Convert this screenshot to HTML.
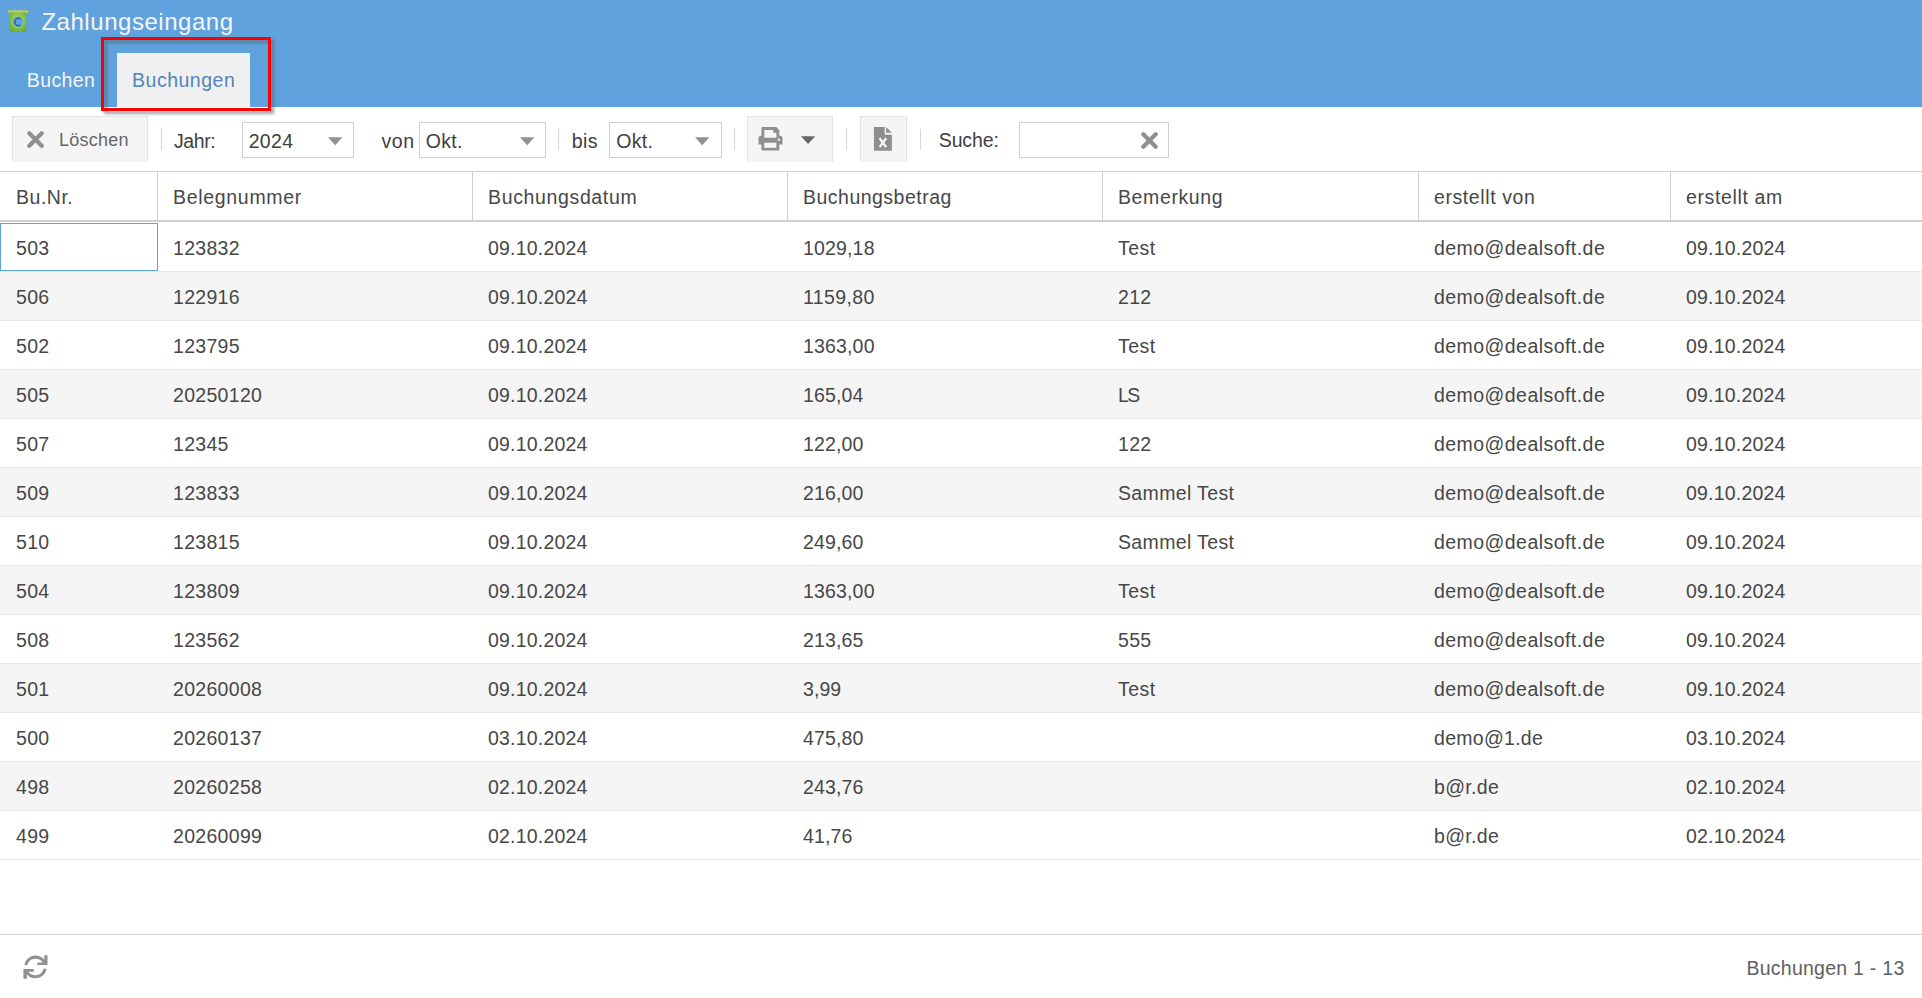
<!DOCTYPE html>
<html><head><meta charset="utf-8"><title>Zahlungseingang</title>
<style>
html,body{margin:0;padding:0;width:1922px;height:998px;overflow:hidden;background:#fff}
body{position:relative;font-family:"Liberation Sans",sans-serif}
.t{position:absolute;white-space:nowrap;font-family:"Liberation Sans",sans-serif}
div,svg{box-sizing:content-box}
</style></head><body>
<div style="position:absolute;left:0;top:0;width:1922px;height:107px;background:#5fa2dd"></div>
<svg style="position:absolute;left:0;top:0" width="40" height="40" viewBox="0 0 40 40">
<defs><radialGradient id="lg" cx="50%" cy="40%" r="65%"><stop offset="0" stop-color="#a3d845"/><stop offset="0.6" stop-color="#8cc63c"/><stop offset="1" stop-color="#6aa936"/></radialGradient></defs>
<rect x="7.3" y="9.8" width="21.4" height="4.2" rx="1.3" fill="#93b07c"/>
<rect x="8" y="10.4" width="20" height="2" rx="0.8" fill="#b2cf84"/>
<path d="M9.9 12.6 H26.2 V31 Q26.2 32 25.2 32 H10.9 Q9.9 32 9.9 31 Z" fill="url(#lg)"/>
<circle cx="17.9" cy="21.9" r="5.7" fill="#8fc9a8"/>
<circle cx="17.9" cy="21.9" r="5.1" fill="#5fa2dd"/>
<path d="M20.5 18.9 A3.5 3.8 0 1 0 20.5 25.0" fill="none" stroke="#2d6499" stroke-width="1.25"/>
</svg>
<div class="t" style="left:41.40px;top:9.98px;font-size:24px;line-height:24px;letter-spacing:0.398px;color:#f5f5f5;letter-spacing:0.54px">Zahlungseingang</div>
<div class="t" style="left:26.80px;top:71.49px;font-size:19.5px;line-height:19.5px;letter-spacing:0.395px;color:#f5f5f5;">Buchen</div>
<div style="position:absolute;left:117px;top:53px;width:133px;height:54px;background:#f0f0f0"></div>
<div class="t" style="left:132.10px;top:71.49px;font-size:19.5px;line-height:19.5px;letter-spacing:0.495px;color:#5284b8;">Buchungen</div>
<div style="position:absolute;left:101px;top:37px;width:164px;height:68px;border:3px solid #ff0000;filter:drop-shadow(3px 3px 1.8px rgba(85,95,105,0.6))"></div>
<div style="position:absolute;left:12px;top:116px;width:134px;height:45px;background:#f5f5f5;border:1px solid #e4e4e4;border-bottom:0"></div>
<svg style="position:absolute;left:27px;top:130.5px" width="17" height="17" viewBox="0 0 17 17"><path d="M2.3 2.3 L14.7 14.7 M14.7 2.3 L2.3 14.7" stroke="#8f8f8f" stroke-width="4.2" stroke-linecap="round"/></svg>
<div class="t" style="left:59.10px;top:130.76px;font-size:18px;line-height:18px;letter-spacing:0.208px;color:#666666;">Löschen</div>
<div style="position:absolute;left:161px;top:129px;width:1px;height:21px;background:#d6d6d6"></div>
<div class="t" style="left:174.00px;top:132.49px;font-size:19.5px;line-height:19.5px;letter-spacing:-0.436px;color:#404040;">Jahr:</div>
<div style="position:absolute;left:242px;top:122px;width:110px;height:34px;background:#fff;border:1px solid #cfcfcf"></div><div class="t" style="left:248.70px;top:132.49px;font-size:19.5px;line-height:19.5px;letter-spacing:0.304px;color:#404040;">2024</div><svg style="position:absolute;left:327.7px;top:137px" width="15" height="9" viewBox="0 0 15 9"><path d="M0 0.3 H14.4 L7.2 8.2 Z" fill="#919191"/></svg>
<div class="t" style="left:381.40px;top:132.49px;font-size:19.5px;line-height:19.5px;letter-spacing:0.692px;color:#404040;">von</div>
<div style="position:absolute;left:419px;top:122px;width:125px;height:34px;background:#fff;border:1px solid #cfcfcf"></div><div class="t" style="left:425.70px;top:132.49px;font-size:19.5px;line-height:19.5px;letter-spacing:0.338px;color:#404040;">Okt.</div><svg style="position:absolute;left:519.8px;top:137px" width="15" height="9" viewBox="0 0 15 9"><path d="M0 0.3 H14.4 L7.2 8.2 Z" fill="#919191"/></svg>
<div style="position:absolute;left:558px;top:129px;width:1px;height:21px;background:#d6d6d6"></div>
<div class="t" style="left:571.70px;top:132.49px;font-size:19.5px;line-height:19.5px;letter-spacing:0.419px;color:#404040;">bis</div>
<div style="position:absolute;left:609px;top:122px;width:111px;height:34px;background:#fff;border:1px solid #cfcfcf"></div><div class="t" style="left:616.20px;top:132.49px;font-size:19.5px;line-height:19.5px;letter-spacing:0.338px;color:#404040;">Okt.</div><svg style="position:absolute;left:695.3px;top:137px" width="15" height="9" viewBox="0 0 15 9"><path d="M0 0.3 H14.4 L7.2 8.2 Z" fill="#919191"/></svg>
<div style="position:absolute;left:734px;top:129px;width:1px;height:21px;background:#d6d6d6"></div>
<div style="position:absolute;left:747px;top:116px;width:84px;height:45px;background:#f5f5f5;border:1px solid #e4e4e4;border-bottom:0"></div>
<svg style="position:absolute;left:757px;top:126px" width="27" height="26" viewBox="0 0 27 26">
<g fill="#8f8f8f">
<path d="M4.4 2.1 Q4.4 1.1 5.4 1.1 H19.4 L22.3 4.3 V11 H4.4 Z"/>
<path d="M1.5 12.3 Q1.5 9.8 4 9.8 H23 Q25.5 9.8 25.5 12.3 V18.6 H1.5 Z"/>
<path d="M4.4 16 H22.3 V23.5 Q22.3 24.5 21.3 24.5 H5.4 Q4.4 24.5 4.4 23.5 Z"/>
</g>
<g fill="#f5f5f5">
<path d="M7.3 3.9 H16.2 V6.7 H19.4 V11.7 H7.3 Z"/>
<path d="M7.3 16.7 H19.4 V21.8 H7.3 Z"/>
<circle cx="21.8" cy="13.8" r="1.2"/>
</g>
</svg>
<svg style="position:absolute;left:800.9px;top:136px" width="15" height="9" viewBox="0 0 15 9"><path d="M0 0.2 H14.2 L7.1 8.1 Z" fill="#666666"/></svg>
<div style="position:absolute;left:846px;top:129px;width:1px;height:21px;background:#d6d6d6"></div>
<div style="position:absolute;left:860px;top:116px;width:45px;height:45px;background:#f5f5f5;border:1px solid #e4e4e4;border-bottom:0"></div>
<svg style="position:absolute;left:873px;top:126px" width="20" height="26" viewBox="0 0 20 26">
<path d="M0.9 1 H11.7 V7.5 Q11.7 8.7 12.9 8.7 H18.9 V24.7 H0.9 Z" fill="#8f8f8f"/>
<path d="M13.1 1 L18.9 6.7 H13.1 Z" fill="#8f8f8f"/>
<path d="M6.6 12.2 L13.2 21.1 M13.2 12.2 L6.6 21.1" stroke="#f5f5f5" stroke-width="2.4" fill="none"/>
</svg>
<div style="position:absolute;left:920px;top:129px;width:1px;height:21px;background:#d6d6d6"></div>
<div class="t" style="left:938.80px;top:131.49px;font-size:19.5px;line-height:19.5px;letter-spacing:-0.141px;color:#404040;">Suche:</div>
<div style="position:absolute;left:1019px;top:122px;width:148px;height:34px;background:#fff;border:1px solid #cfcfcf"></div>
<svg style="position:absolute;left:1141px;top:131.5px" width="17" height="17" viewBox="0 0 17 17"><path d="M2.3 2.3 L14.7 14.7 M14.7 2.3 L2.3 14.7" stroke="#8f8f8f" stroke-width="4.2" stroke-linecap="round"/></svg>
<div style="position:absolute;left:0;top:171px;width:1922px;height:1px;background:#d0d0d0"></div>
<div style="position:absolute;left:0;top:220px;width:1922px;height:2px;background:#d0d0d0"></div>
<div style="position:absolute;left:157px;top:172px;width:1px;height:48px;background:#d0d0d0"></div>
<div style="position:absolute;left:472px;top:172px;width:1px;height:48px;background:#d0d0d0"></div>
<div style="position:absolute;left:787px;top:172px;width:1px;height:48px;background:#d0d0d0"></div>
<div style="position:absolute;left:1102px;top:172px;width:1px;height:48px;background:#d0d0d0"></div>
<div style="position:absolute;left:1418px;top:172px;width:1px;height:48px;background:#d0d0d0"></div>
<div style="position:absolute;left:1670px;top:172px;width:1px;height:48px;background:#d0d0d0"></div>
<div class="t" style="left:16.00px;top:188.49px;font-size:19.5px;line-height:19.5px;letter-spacing:0.514px;color:#474747;">Bu.Nr.</div>
<div class="t" style="left:173.00px;top:188.49px;font-size:19.5px;line-height:19.5px;letter-spacing:0.690px;color:#474747;">Belegnummer</div>
<div class="t" style="left:488.00px;top:188.49px;font-size:19.5px;line-height:19.5px;letter-spacing:0.644px;color:#474747;">Buchungsdatum</div>
<div class="t" style="left:803.00px;top:188.49px;font-size:19.5px;line-height:19.5px;letter-spacing:0.483px;color:#474747;">Buchungsbetrag</div>
<div class="t" style="left:1118.00px;top:188.49px;font-size:19.5px;line-height:19.5px;letter-spacing:0.610px;color:#474747;">Bemerkung</div>
<div class="t" style="left:1434.00px;top:188.49px;font-size:19.5px;line-height:19.5px;letter-spacing:0.589px;color:#474747;">erstellt von</div>
<div class="t" style="left:1686.00px;top:188.49px;font-size:19.5px;line-height:19.5px;letter-spacing:0.626px;color:#474747;">erstellt am</div>
<div style="position:absolute;left:0;top:222px;width:1922px;height:49px;background:#ffffff;border-bottom:1px solid #e8e8e8"></div>
<div class="t" style="left:16.00px;top:239.49px;font-size:19.5px;line-height:19.5px;letter-spacing:0.304px;color:#474747;">503</div>
<div class="t" style="left:173.00px;top:239.49px;font-size:19.5px;line-height:19.5px;letter-spacing:0.304px;color:#474747;">123832</div>
<div class="t" style="left:488.00px;top:239.49px;font-size:19.5px;line-height:19.5px;letter-spacing:0.198px;color:#474747;">09.10.2024</div>
<div class="t" style="left:803.00px;top:239.49px;font-size:19.5px;line-height:19.5px;letter-spacing:0.164px;color:#474747;">1029,18</div>
<div class="t" style="left:1118.00px;top:239.49px;font-size:19.5px;line-height:19.5px;letter-spacing:0.483px;color:#474747;">Test</div>
<div class="t" style="left:1434.00px;top:239.49px;font-size:19.5px;line-height:19.5px;letter-spacing:0.451px;color:#474747;">demo@dealsoft.de</div>
<div class="t" style="left:1686.00px;top:239.49px;font-size:19.5px;line-height:19.5px;letter-spacing:0.198px;color:#474747;">09.10.2024</div>
<div style="position:absolute;left:0;top:272px;width:1922px;height:48px;background:#f5f5f5;border-bottom:1px solid #e8e8e8"></div>
<div class="t" style="left:16.00px;top:288.49px;font-size:19.5px;line-height:19.5px;letter-spacing:0.304px;color:#474747;">506</div>
<div class="t" style="left:173.00px;top:288.49px;font-size:19.5px;line-height:19.5px;letter-spacing:0.304px;color:#474747;">122916</div>
<div class="t" style="left:488.00px;top:288.49px;font-size:19.5px;line-height:19.5px;letter-spacing:0.198px;color:#474747;">09.10.2024</div>
<div class="t" style="left:803.00px;top:288.49px;font-size:19.5px;line-height:19.5px;letter-spacing:0.371px;color:#474747;">1159,80</div>
<div class="t" style="left:1118.00px;top:288.49px;font-size:19.5px;line-height:19.5px;letter-spacing:0.304px;color:#474747;">212</div>
<div class="t" style="left:1434.00px;top:288.49px;font-size:19.5px;line-height:19.5px;letter-spacing:0.451px;color:#474747;">demo@dealsoft.de</div>
<div class="t" style="left:1686.00px;top:288.49px;font-size:19.5px;line-height:19.5px;letter-spacing:0.198px;color:#474747;">09.10.2024</div>
<div style="position:absolute;left:0;top:321px;width:1922px;height:48px;background:#ffffff;border-bottom:1px solid #e8e8e8"></div>
<div class="t" style="left:16.00px;top:337.49px;font-size:19.5px;line-height:19.5px;letter-spacing:0.304px;color:#474747;">502</div>
<div class="t" style="left:173.00px;top:337.49px;font-size:19.5px;line-height:19.5px;letter-spacing:0.304px;color:#474747;">123795</div>
<div class="t" style="left:488.00px;top:337.49px;font-size:19.5px;line-height:19.5px;letter-spacing:0.198px;color:#474747;">09.10.2024</div>
<div class="t" style="left:803.00px;top:337.49px;font-size:19.5px;line-height:19.5px;letter-spacing:0.164px;color:#474747;">1363,00</div>
<div class="t" style="left:1118.00px;top:337.49px;font-size:19.5px;line-height:19.5px;letter-spacing:0.483px;color:#474747;">Test</div>
<div class="t" style="left:1434.00px;top:337.49px;font-size:19.5px;line-height:19.5px;letter-spacing:0.451px;color:#474747;">demo@dealsoft.de</div>
<div class="t" style="left:1686.00px;top:337.49px;font-size:19.5px;line-height:19.5px;letter-spacing:0.198px;color:#474747;">09.10.2024</div>
<div style="position:absolute;left:0;top:370px;width:1922px;height:48px;background:#f5f5f5;border-bottom:1px solid #e8e8e8"></div>
<div class="t" style="left:16.00px;top:386.49px;font-size:19.5px;line-height:19.5px;letter-spacing:0.304px;color:#474747;">505</div>
<div class="t" style="left:173.00px;top:386.49px;font-size:19.5px;line-height:19.5px;letter-spacing:0.304px;color:#474747;">20250120</div>
<div class="t" style="left:488.00px;top:386.49px;font-size:19.5px;line-height:19.5px;letter-spacing:0.198px;color:#474747;">09.10.2024</div>
<div class="t" style="left:803.00px;top:386.49px;font-size:19.5px;line-height:19.5px;letter-spacing:0.141px;color:#474747;">165,04</div>
<div class="t" style="left:1118.00px;top:386.49px;font-size:19.5px;line-height:19.5px;letter-spacing:-1.638px;color:#474747;">LS</div>
<div class="t" style="left:1434.00px;top:386.49px;font-size:19.5px;line-height:19.5px;letter-spacing:0.451px;color:#474747;">demo@dealsoft.de</div>
<div class="t" style="left:1686.00px;top:386.49px;font-size:19.5px;line-height:19.5px;letter-spacing:0.198px;color:#474747;">09.10.2024</div>
<div style="position:absolute;left:0;top:419px;width:1922px;height:48px;background:#ffffff;border-bottom:1px solid #e8e8e8"></div>
<div class="t" style="left:16.00px;top:435.49px;font-size:19.5px;line-height:19.5px;letter-spacing:0.304px;color:#474747;">507</div>
<div class="t" style="left:173.00px;top:435.49px;font-size:19.5px;line-height:19.5px;letter-spacing:0.304px;color:#474747;">12345</div>
<div class="t" style="left:488.00px;top:435.49px;font-size:19.5px;line-height:19.5px;letter-spacing:0.198px;color:#474747;">09.10.2024</div>
<div class="t" style="left:803.00px;top:435.49px;font-size:19.5px;line-height:19.5px;letter-spacing:0.141px;color:#474747;">122,00</div>
<div class="t" style="left:1118.00px;top:435.49px;font-size:19.5px;line-height:19.5px;letter-spacing:0.304px;color:#474747;">122</div>
<div class="t" style="left:1434.00px;top:435.49px;font-size:19.5px;line-height:19.5px;letter-spacing:0.451px;color:#474747;">demo@dealsoft.de</div>
<div class="t" style="left:1686.00px;top:435.49px;font-size:19.5px;line-height:19.5px;letter-spacing:0.198px;color:#474747;">09.10.2024</div>
<div style="position:absolute;left:0;top:468px;width:1922px;height:48px;background:#f5f5f5;border-bottom:1px solid #e8e8e8"></div>
<div class="t" style="left:16.00px;top:484.49px;font-size:19.5px;line-height:19.5px;letter-spacing:0.304px;color:#474747;">509</div>
<div class="t" style="left:173.00px;top:484.49px;font-size:19.5px;line-height:19.5px;letter-spacing:0.304px;color:#474747;">123833</div>
<div class="t" style="left:488.00px;top:484.49px;font-size:19.5px;line-height:19.5px;letter-spacing:0.198px;color:#474747;">09.10.2024</div>
<div class="t" style="left:803.00px;top:484.49px;font-size:19.5px;line-height:19.5px;letter-spacing:0.141px;color:#474747;">216,00</div>
<div class="t" style="left:1118.00px;top:484.49px;font-size:19.5px;line-height:19.5px;letter-spacing:0.356px;color:#474747;">Sammel Test</div>
<div class="t" style="left:1434.00px;top:484.49px;font-size:19.5px;line-height:19.5px;letter-spacing:0.451px;color:#474747;">demo@dealsoft.de</div>
<div class="t" style="left:1686.00px;top:484.49px;font-size:19.5px;line-height:19.5px;letter-spacing:0.198px;color:#474747;">09.10.2024</div>
<div style="position:absolute;left:0;top:517px;width:1922px;height:48px;background:#ffffff;border-bottom:1px solid #e8e8e8"></div>
<div class="t" style="left:16.00px;top:533.49px;font-size:19.5px;line-height:19.5px;letter-spacing:0.304px;color:#474747;">510</div>
<div class="t" style="left:173.00px;top:533.49px;font-size:19.5px;line-height:19.5px;letter-spacing:0.304px;color:#474747;">123815</div>
<div class="t" style="left:488.00px;top:533.49px;font-size:19.5px;line-height:19.5px;letter-spacing:0.198px;color:#474747;">09.10.2024</div>
<div class="t" style="left:803.00px;top:533.49px;font-size:19.5px;line-height:19.5px;letter-spacing:0.141px;color:#474747;">249,60</div>
<div class="t" style="left:1118.00px;top:533.49px;font-size:19.5px;line-height:19.5px;letter-spacing:0.356px;color:#474747;">Sammel Test</div>
<div class="t" style="left:1434.00px;top:533.49px;font-size:19.5px;line-height:19.5px;letter-spacing:0.451px;color:#474747;">demo@dealsoft.de</div>
<div class="t" style="left:1686.00px;top:533.49px;font-size:19.5px;line-height:19.5px;letter-spacing:0.198px;color:#474747;">09.10.2024</div>
<div style="position:absolute;left:0;top:566px;width:1922px;height:48px;background:#f5f5f5;border-bottom:1px solid #e8e8e8"></div>
<div class="t" style="left:16.00px;top:582.49px;font-size:19.5px;line-height:19.5px;letter-spacing:0.304px;color:#474747;">504</div>
<div class="t" style="left:173.00px;top:582.49px;font-size:19.5px;line-height:19.5px;letter-spacing:0.304px;color:#474747;">123809</div>
<div class="t" style="left:488.00px;top:582.49px;font-size:19.5px;line-height:19.5px;letter-spacing:0.198px;color:#474747;">09.10.2024</div>
<div class="t" style="left:803.00px;top:582.49px;font-size:19.5px;line-height:19.5px;letter-spacing:0.164px;color:#474747;">1363,00</div>
<div class="t" style="left:1118.00px;top:582.49px;font-size:19.5px;line-height:19.5px;letter-spacing:0.483px;color:#474747;">Test</div>
<div class="t" style="left:1434.00px;top:582.49px;font-size:19.5px;line-height:19.5px;letter-spacing:0.451px;color:#474747;">demo@dealsoft.de</div>
<div class="t" style="left:1686.00px;top:582.49px;font-size:19.5px;line-height:19.5px;letter-spacing:0.198px;color:#474747;">09.10.2024</div>
<div style="position:absolute;left:0;top:615px;width:1922px;height:48px;background:#ffffff;border-bottom:1px solid #e8e8e8"></div>
<div class="t" style="left:16.00px;top:631.49px;font-size:19.5px;line-height:19.5px;letter-spacing:0.304px;color:#474747;">508</div>
<div class="t" style="left:173.00px;top:631.49px;font-size:19.5px;line-height:19.5px;letter-spacing:0.304px;color:#474747;">123562</div>
<div class="t" style="left:488.00px;top:631.49px;font-size:19.5px;line-height:19.5px;letter-spacing:0.198px;color:#474747;">09.10.2024</div>
<div class="t" style="left:803.00px;top:631.49px;font-size:19.5px;line-height:19.5px;letter-spacing:0.141px;color:#474747;">213,65</div>
<div class="t" style="left:1118.00px;top:631.49px;font-size:19.5px;line-height:19.5px;letter-spacing:0.304px;color:#474747;">555</div>
<div class="t" style="left:1434.00px;top:631.49px;font-size:19.5px;line-height:19.5px;letter-spacing:0.451px;color:#474747;">demo@dealsoft.de</div>
<div class="t" style="left:1686.00px;top:631.49px;font-size:19.5px;line-height:19.5px;letter-spacing:0.198px;color:#474747;">09.10.2024</div>
<div style="position:absolute;left:0;top:664px;width:1922px;height:48px;background:#f5f5f5;border-bottom:1px solid #e8e8e8"></div>
<div class="t" style="left:16.00px;top:680.49px;font-size:19.5px;line-height:19.5px;letter-spacing:0.304px;color:#474747;">501</div>
<div class="t" style="left:173.00px;top:680.49px;font-size:19.5px;line-height:19.5px;letter-spacing:0.304px;color:#474747;">20260008</div>
<div class="t" style="left:488.00px;top:680.49px;font-size:19.5px;line-height:19.5px;letter-spacing:0.198px;color:#474747;">09.10.2024</div>
<div class="t" style="left:803.00px;top:680.49px;font-size:19.5px;line-height:19.5px;letter-spacing:0.059px;color:#474747;">3,99</div>
<div class="t" style="left:1118.00px;top:680.49px;font-size:19.5px;line-height:19.5px;letter-spacing:0.483px;color:#474747;">Test</div>
<div class="t" style="left:1434.00px;top:680.49px;font-size:19.5px;line-height:19.5px;letter-spacing:0.451px;color:#474747;">demo@dealsoft.de</div>
<div class="t" style="left:1686.00px;top:680.49px;font-size:19.5px;line-height:19.5px;letter-spacing:0.198px;color:#474747;">09.10.2024</div>
<div style="position:absolute;left:0;top:713px;width:1922px;height:48px;background:#ffffff;border-bottom:1px solid #e8e8e8"></div>
<div class="t" style="left:16.00px;top:729.49px;font-size:19.5px;line-height:19.5px;letter-spacing:0.304px;color:#474747;">500</div>
<div class="t" style="left:173.00px;top:729.49px;font-size:19.5px;line-height:19.5px;letter-spacing:0.304px;color:#474747;">20260137</div>
<div class="t" style="left:488.00px;top:729.49px;font-size:19.5px;line-height:19.5px;letter-spacing:0.198px;color:#474747;">03.10.2024</div>
<div class="t" style="left:803.00px;top:729.49px;font-size:19.5px;line-height:19.5px;letter-spacing:0.141px;color:#474747;">475,80</div>
<div class="t" style="left:1434.00px;top:729.49px;font-size:19.5px;line-height:19.5px;letter-spacing:0.287px;color:#474747;">demo@1.de</div>
<div class="t" style="left:1686.00px;top:729.49px;font-size:19.5px;line-height:19.5px;letter-spacing:0.198px;color:#474747;">03.10.2024</div>
<div style="position:absolute;left:0;top:762px;width:1922px;height:48px;background:#f5f5f5;border-bottom:1px solid #e8e8e8"></div>
<div class="t" style="left:16.00px;top:778.49px;font-size:19.5px;line-height:19.5px;letter-spacing:0.304px;color:#474747;">498</div>
<div class="t" style="left:173.00px;top:778.49px;font-size:19.5px;line-height:19.5px;letter-spacing:0.304px;color:#474747;">20260258</div>
<div class="t" style="left:488.00px;top:778.49px;font-size:19.5px;line-height:19.5px;letter-spacing:0.198px;color:#474747;">02.10.2024</div>
<div class="t" style="left:803.00px;top:778.49px;font-size:19.5px;line-height:19.5px;letter-spacing:0.141px;color:#474747;">243,76</div>
<div class="t" style="left:1434.00px;top:778.49px;font-size:19.5px;line-height:19.5px;letter-spacing:0.317px;color:#474747;">b@r.de</div>
<div class="t" style="left:1686.00px;top:778.49px;font-size:19.5px;line-height:19.5px;letter-spacing:0.198px;color:#474747;">02.10.2024</div>
<div style="position:absolute;left:0;top:811px;width:1922px;height:48px;background:#ffffff;border-bottom:1px solid #e8e8e8"></div>
<div class="t" style="left:16.00px;top:827.49px;font-size:19.5px;line-height:19.5px;letter-spacing:0.304px;color:#474747;">499</div>
<div class="t" style="left:173.00px;top:827.49px;font-size:19.5px;line-height:19.5px;letter-spacing:0.304px;color:#474747;">20260099</div>
<div class="t" style="left:488.00px;top:827.49px;font-size:19.5px;line-height:19.5px;letter-spacing:0.198px;color:#474747;">02.10.2024</div>
<div class="t" style="left:803.00px;top:827.49px;font-size:19.5px;line-height:19.5px;letter-spacing:0.108px;color:#474747;">41,76</div>
<div class="t" style="left:1434.00px;top:827.49px;font-size:19.5px;line-height:19.5px;letter-spacing:0.317px;color:#474747;">b@r.de</div>
<div class="t" style="left:1686.00px;top:827.49px;font-size:19.5px;line-height:19.5px;letter-spacing:0.198px;color:#474747;">02.10.2024</div>
<div style="position:absolute;left:0;top:223px;width:156px;height:46px;border:1px solid #5fa2dd"></div>
<div style="position:absolute;left:0;top:934px;width:1922px;height:1px;background:#d0d0d0"></div>
<svg style="position:absolute;left:22px;top:954px" width="27" height="26" viewBox="0 0 27 26">
<g fill="none" stroke="#919191" stroke-width="3.2">
<path d="M3.84 11 A9.8 9.8 0 0 1 22.9 10.2"/>
<path d="M23.06 14.8 A9.8 9.8 0 0 1 4.0 15.6"/>
</g>
<g fill="#919191">
<path d="M22.3 1.2 H25.5 V11 H15.2 V8.4 H22.3 Z"/>
<path d="M1.4 14.9 H11.8 V17.7 H4.9 V24.7 H1.4 Z"/>
</g>
</svg>
<div class="t" style="right:17.50px;top:959.49px;font-size:19.5px;line-height:19.5px;letter-spacing:0.256px;color:#606060;">Buchungen 1 - 13</div>
</body></html>
